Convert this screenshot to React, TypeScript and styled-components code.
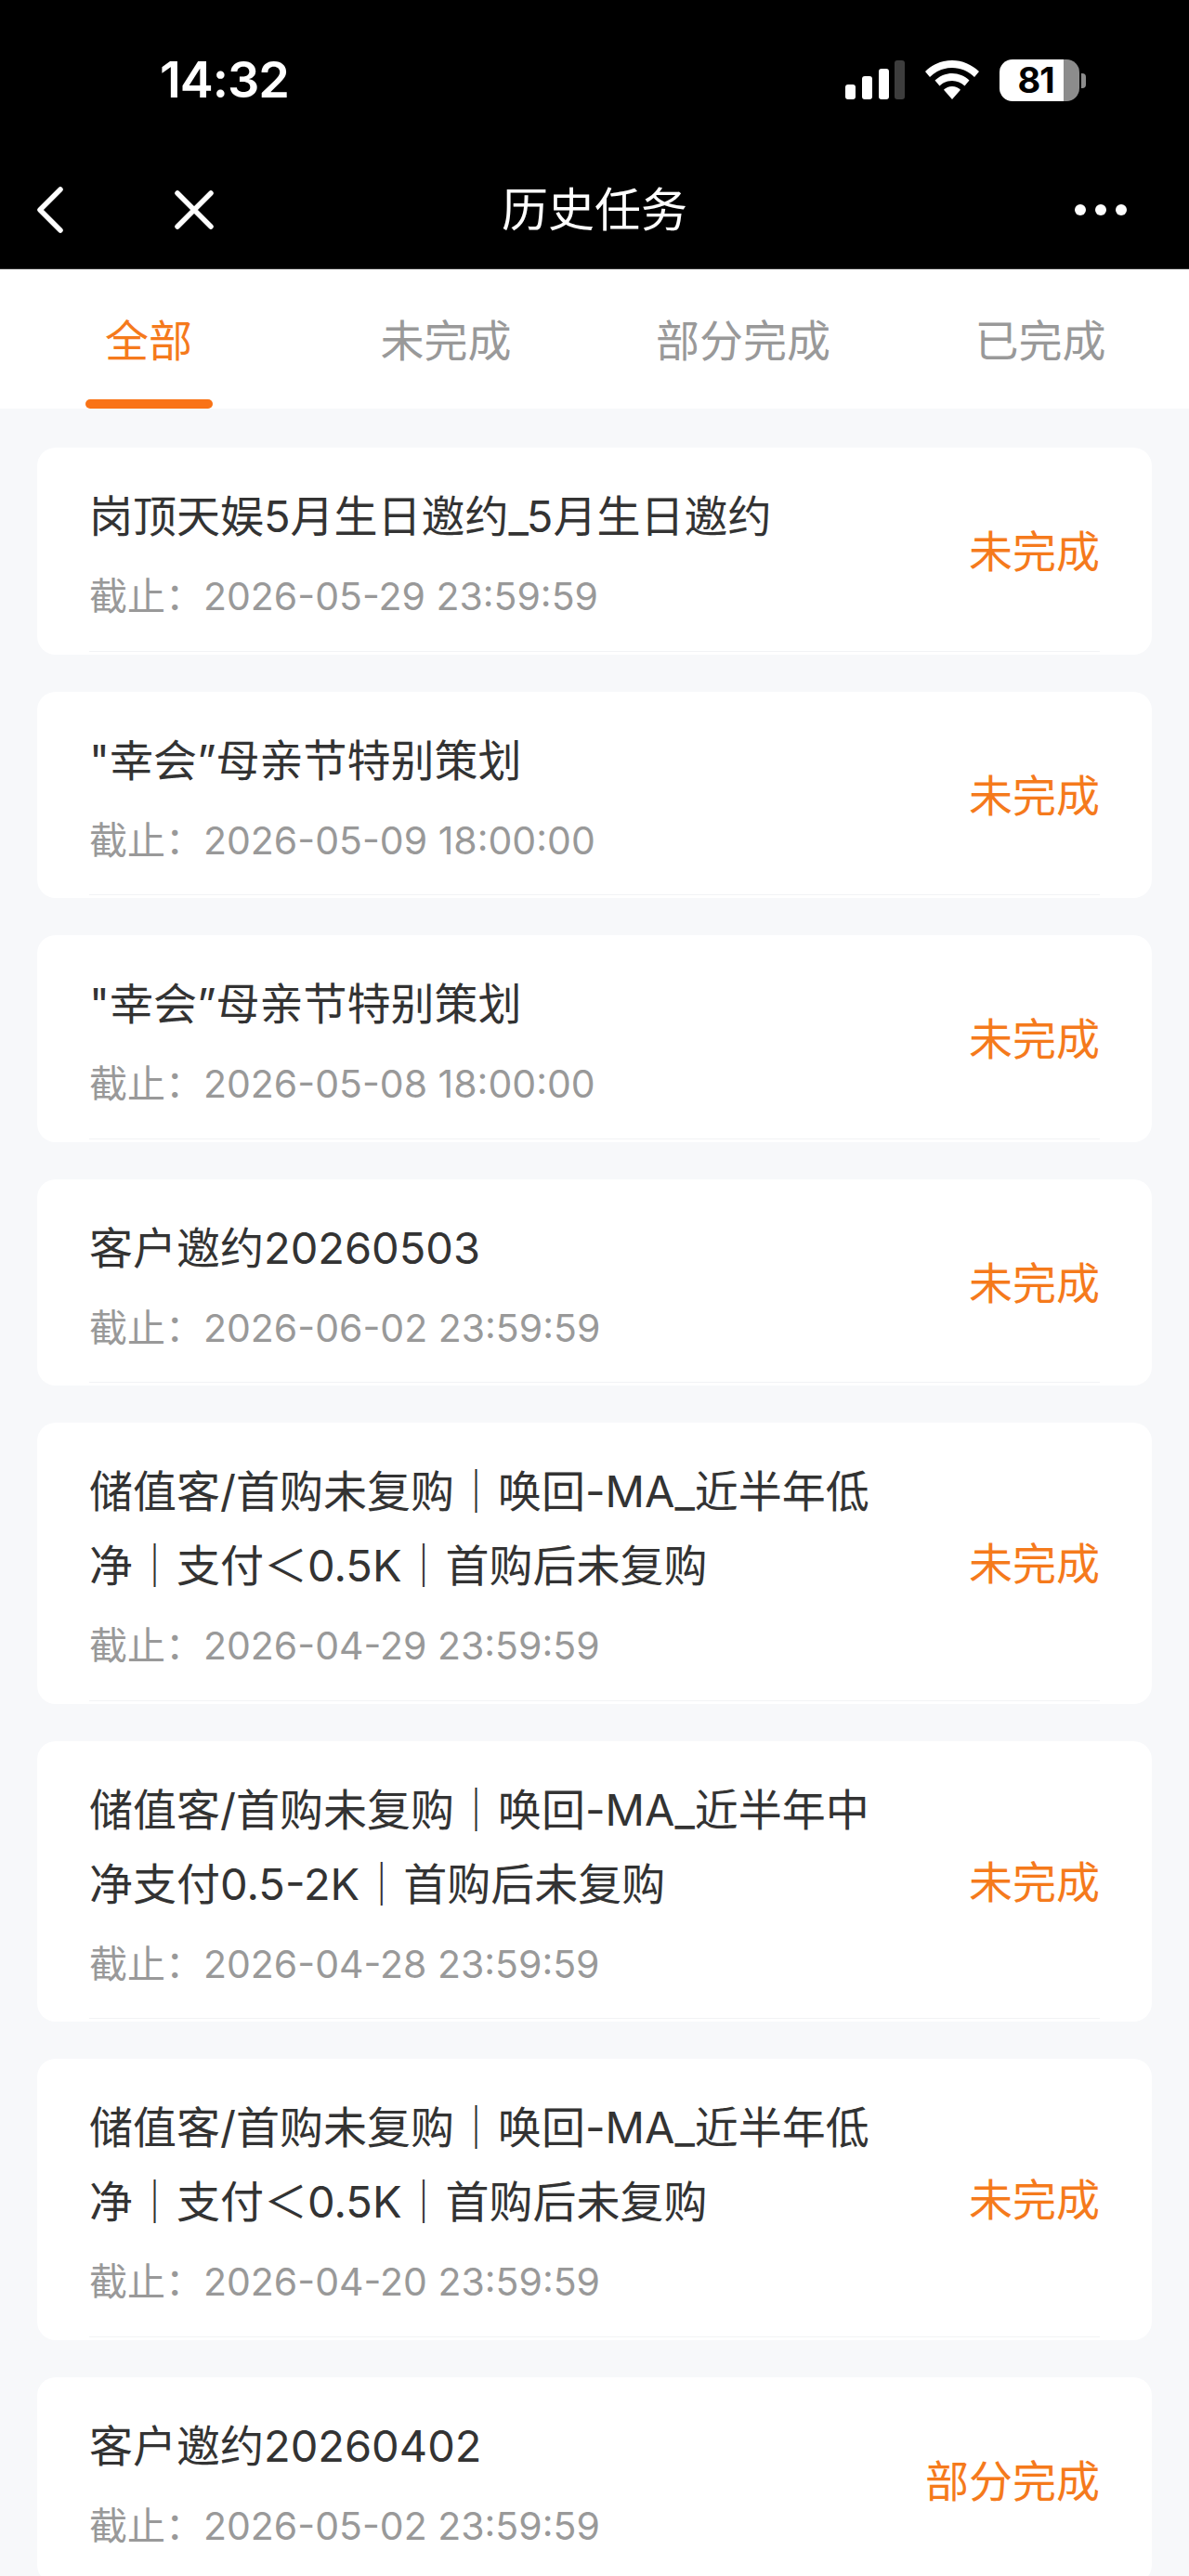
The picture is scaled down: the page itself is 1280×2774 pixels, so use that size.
import styled, { createGlobalStyle } from 'styled-components';

const GlobalStyle = createGlobalStyle`
  html, body {
    margin: 0;
    padding: 0;
    background: #f7f8fa;
  }
  * {
    box-sizing: border-box;
  }
`;

const FONT = `Inter, "Noto Sans CJK SC", sans-serif`;

const Page = styled.main`
  width: 1280px;
  height: 2774px;
  overflow: hidden;
  background: #f7f8fa;
  font-family: ${FONT};
`;

const Header = styled.header`
  height: 290px;
  background: #000;
  color: #fff;
  display: flex;
  flex-direction: column;
  border-bottom: 1px solid #333;
`;

const StatusBar = styled.div`
  height: 172px;
  padding: 56px 118px 0 172px;
  display: flex;
  align-items: flex-start;
  justify-content: space-between;
`;

const Time = styled.div`
  font-size: 54px;
  line-height: 60px;
  font-weight: 600;
  letter-spacing: -1px;
`;

const StatusIcons = styled.div`
  display: flex;
  align-items: center;
  gap: 22px;
  height: 60px;
`;

const Battery = styled.div`
  position: relative;
  width: 86px;
  height: 45px;
  border-radius: 14px;
  background: linear-gradient(to right, #fff 80%, #8c8c8c 80%);
  color: #000;
  font-size: 38px;
  line-height: 45px;
  font-weight: 700;
  letter-spacing: -1px;
  text-align: center;
  padding-right: 8px;

  &::after {
    content: '';
    position: absolute;
    right: -7px;
    top: 15px;
    width: 5px;
    height: 16px;
    border-radius: 0 4px 4px 0;
    background: #8c8c8c;
  }
`;

const NavBar = styled.div`
  flex: 1;
  display: grid;
  grid-template-columns: 1fr auto 1fr;
  align-items: center;
  padding: 0 40px 9px;
`;

const NavLeft = styled.div`
  display: flex;
  align-items: center;
  gap: 119px;
`;

const NavTitle = styled.div`
  font-size: 50px;
  line-height: 60px;
  font-weight: 400;
`;

const NavRight = styled.div`
  display: flex;
  justify-content: flex-end;
  padding-right: 26px;
`;

const Tabs = styled.nav`
  height: 150px;
  background: #fff;
  display: flex;
`;

const Tab = styled.div<{ $active?: boolean }>`
  position: relative;
  flex: 1;
  text-align: center;
  padding-top: 47px;
  font-size: 47px;
  line-height: 60px;
  color: ${(p) => (p.$active ? '#f57a1c' : '#999')};

  ${(p) =>
    p.$active &&
    `&::after {
      content: '';
      position: absolute;
      left: 92px;
      bottom: 0;
      width: 137px;
      height: 10px;
      border-radius: 5px;
      background: #f97316;
    }`}
`;

const List = styled.section`
  padding: 42px 40px 0;
  display: flex;
  flex-direction: column;
  gap: 40px;
`;

const Card = styled.article`
  position: relative;
  flex: none;
  background: #fff;
  border-radius: 20px;
  padding: 34px 56px 32.5px 56px;
  display: flex;
  align-items: center;
  justify-content: space-between;

  &::after {
    content: '';
    position: absolute;
    left: 56px;
    right: 56px;
    bottom: 3px;
    height: 1px;
    background: #f2f3f5;
  }
`;

const CardBody = styled.div`
  width: 860px;
`;

const CardTitle = styled.div`
  font-size: 47px;
  line-height: 80px;
  color: #333;
`;

const CardDate = styled.div`
  margin-top: 16px;
  font-size: 41px;
  line-height: 60px;
  color: #999;
`;

const Status = styled.div`
  font-size: 47px;
  line-height: 60px;
  color: #f57a1c;
  white-space: nowrap;
`;

function BackIcon() {
  return (
    <svg width="28" height="50" viewBox="0 0 28 50" aria-hidden>
      <path d="M25 3 3 25l22 22" fill="none" stroke="#fff" strokeWidth="5.5" strokeLinecap="round" strokeLinejoin="round" />
    </svg>
  );
}

function CloseIcon() {
  return (
    <svg width="44" height="44" viewBox="0 0 44 44" aria-hidden>
      <path d="M4 4l36 36M40 4 4 40" fill="none" stroke="#fff" strokeWidth="5.5" strokeLinecap="round" />
    </svg>
  );
}

function MoreIcon() {
  return (
    <svg width="58" height="14" viewBox="0 0 58 14" aria-hidden>
      <circle cx="7" cy="7" r="6" fill="#fff" />
      <circle cx="29" cy="7" r="6" fill="#fff" />
      <circle cx="51" cy="7" r="6" fill="#fff" />
    </svg>
  );
}

function SignalIcon() {
  return (
    <svg width="64" height="42" viewBox="0 0 64 42" aria-hidden>
      <rect x="0" y="26" width="11" height="16" rx="3" fill="#fff" />
      <rect x="18" y="17" width="11" height="25" rx="3" fill="#fff" />
      <rect x="36" y="9" width="11" height="33" rx="3" fill="#fff" />
      <rect x="53" y="0" width="11" height="42" rx="3" fill="#3d3d3d" />
    </svg>
  );
}

function WifiIcon() {
  return (
    <svg width="58" height="42" viewBox="0 0 58 42" aria-hidden>
      <path d="M29 0C18 0 8 4.500 0 12l5 6C11.500 11.500 20 8 29 8s17.500 3.500 24 10l5-6C50 4.500 40 0 29 0Z" fill="#fff" />
      <path d="M29 14c-7 0-13.500 2.800-18.500 7.500l5 6c3.500-3.400 8.300-5.500 13.500-5.500s10 2.100 13.500 5.500l5-6C42.500 16.800 36 14 29 14Z" fill="#fff" />
      <path d="M29 28c-3.600 0-6.800 1.400-9 3.700L29 42l9-10.300c-2.200-2.300-5.400-3.700-9-3.700Z" fill="#fff" />
    </svg>
  );
}

const TABS = ['全部', '未完成', '部分完成', '已完成'];

const TASKS = [
  { title: '岗顶天娱5月生日邀约_5月生日邀约', date: '2026-05-29 23:59:59', status: '未完成' },
  { title: '"幸会”母亲节特别策划', date: '2026-05-09 18:00:00', status: '未完成' },
  { title: '"幸会”母亲节特别策划', date: '2026-05-08 18:00:00', status: '未完成' },
  { title: '客户邀约20260503', date: '2026-06-02 23:59:59', status: '未完成' },
  { title: '储值客/首购未复购｜唤回-MA_近半年低净｜支付＜0.5K｜首购后未复购', date: '2026-04-29 23:59:59', status: '未完成' },
  { title: '储值客/首购未复购｜唤回-MA_近半年中净支付0.5-2K｜首购后未复购', date: '2026-04-28 23:59:59', status: '未完成' },
  { title: '储值客/首购未复购｜唤回-MA_近半年低净｜支付＜0.5K｜首购后未复购', date: '2026-04-20 23:59:59', status: '未完成' },
  { title: '客户邀约20260402', date: '2026-05-02 23:59:59', status: '部分完成' },
];

export default function App() {
  return (
    <Page>
      <GlobalStyle />
      <Header>
        <StatusBar>
          <Time>14:32</Time>
          <StatusIcons>
            <SignalIcon />
            <WifiIcon />
            <Battery>81</Battery>
          </StatusIcons>
        </StatusBar>
        <NavBar>
          <NavLeft>
            <BackIcon />
            <CloseIcon />
          </NavLeft>
          <NavTitle>历史任务</NavTitle>
          <NavRight>
            <MoreIcon />
          </NavRight>
        </NavBar>
      </Header>

      <Tabs>
        {TABS.map((tab, i) => (
          <Tab key={tab} $active={i === 0}>
            {tab}
          </Tab>
        ))}
      </Tabs>

      <List>
        {TASKS.map((task) => (
          <Card key={task.date}>
            <CardBody>
              <CardTitle>{task.title}</CardTitle>
              <CardDate>截止：{task.date}</CardDate>
            </CardBody>
            <Status>{task.status}</Status>
          </Card>
        ))}
      </List>
    </Page>
  );
}
